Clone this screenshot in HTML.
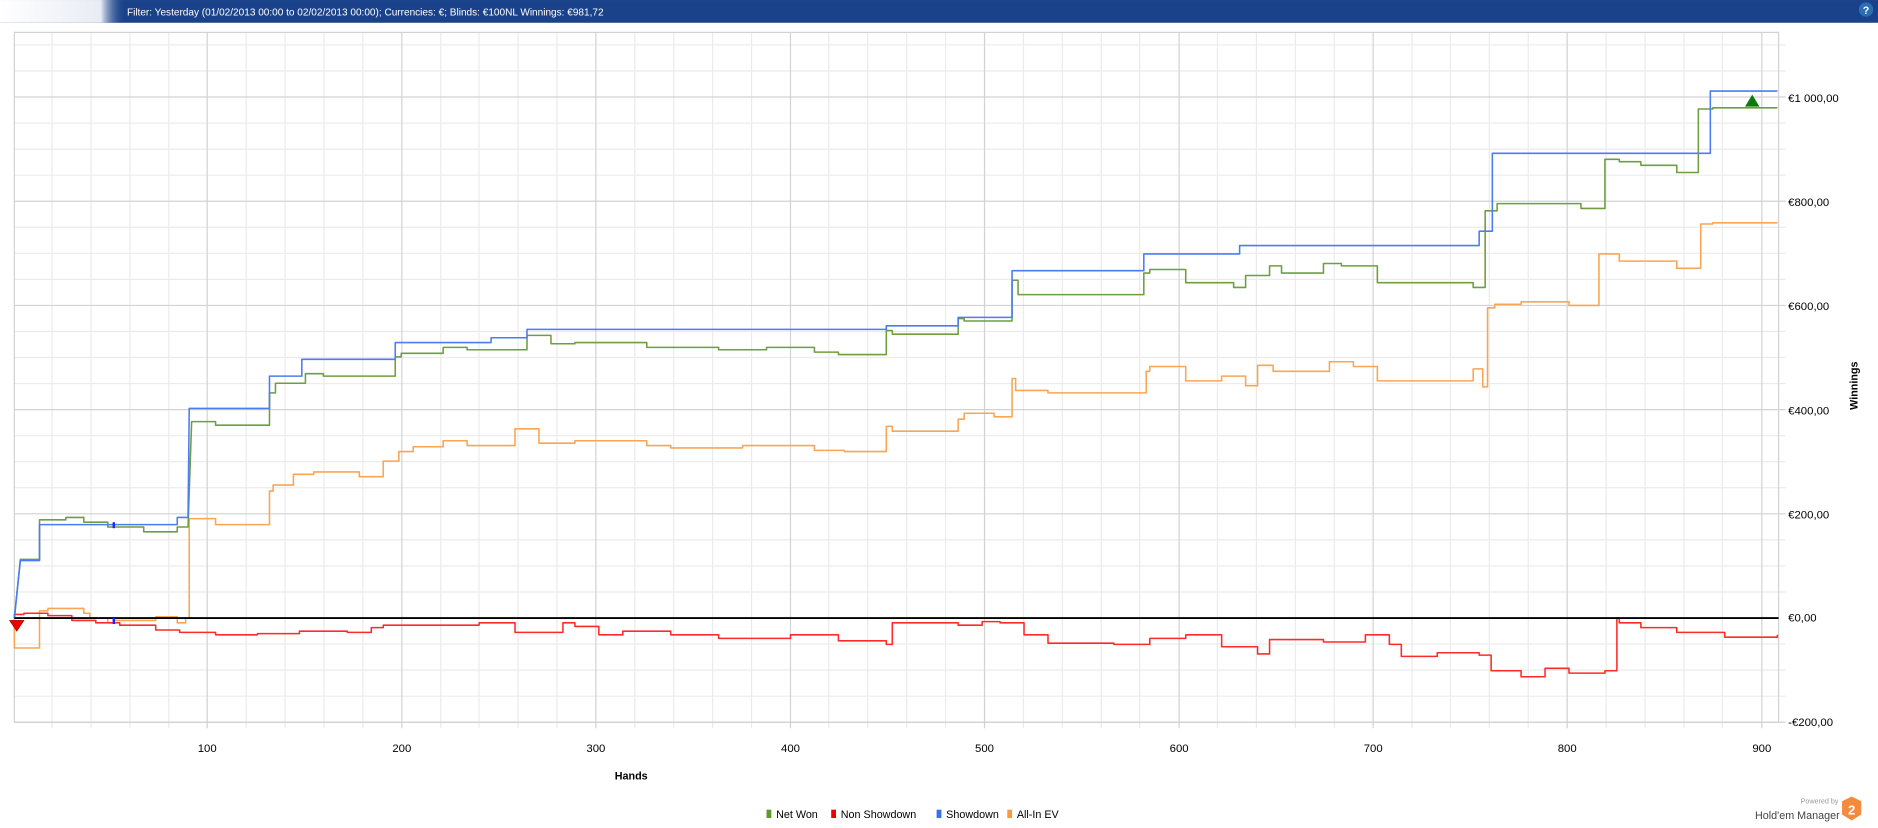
<!DOCTYPE html>
<html><head><meta charset="utf-8"><style>
html,body{margin:0;padding:0;background:#fff;width:1878px;height:828px;overflow:hidden}
svg{display:block}
text{font-family:"Liberation Sans",sans-serif}
</style></head><body>
<svg width="1878" height="828" viewBox="0 0 1568 691.3" xmlns="http://www.w3.org/2000/svg">
<defs>
<linearGradient id="fade" x1="0" x2="1"><stop offset="0" stop-color="#fff"/><stop offset="0.8" stop-color="#e8ecf4"/><stop offset="1" stop-color="#1a428a" stop-opacity="0"/></linearGradient>
</defs>
<rect x="0" y="0" width="1568" height="19" fill="#1a428a"/>
<rect x="0" y="0" width="105" height="19" fill="url(#fade)"/>
<text x="106" y="13" font-size="8.4" fill="#fff">Filter:  Yesterday (01/02/2013 00:00 to 02/02/2013 00:00); Currencies: €; Blinds: €100NL  Winnings:  €981,72</text>
<circle cx="1558" cy="8" r="6" fill="#2a6db3"/>
<text x="1558" y="11.5" font-size="9" font-weight="bold" fill="#fff" text-anchor="middle">?</text>

<g stroke="#ebebeb" stroke-width="1">
<path d="M12 37.5H1491M12 59.25H1491M12 102.75H1491M12 124.5H1491M12 146.25H1491M12 189.75H1491M12 211.5H1491M12 233.25H1491M12 276.75H1491M12 298.5H1491M12 320.25H1491M12 363.75H1491M12 385.5H1491M12 407.25H1491M12 450.75H1491M12 472.5H1491M12 494.25H1491M12 537.75H1491M12 559.5H1491M12 581.25H1491"/>
<path d="M43.5 27V608M76 27V608M108.5 27V608M141 27V608M205.5 27V608M238 27V608M270.5 27V608M303 27V608M368 27V608M400 27V608M432.5 27V608M465 27V608M530 27V608M562.5 27V608M595 27V608M627.5 27V608M692 27V608M724.5 27V608M757 27V608M789.5 27V608M854.5 27V608M887 27V608M919.5 27V608M951.5 27V608M1016.5 27V608M1049 27V608M1081.5 27V608M1114 27V608M1179 27V608M1211 27V608M1243.5 27V608M1276 27V608M1341 27V608M1373.5 27V608M1406 27V608M1438 27V608"/>
</g>
<g stroke="#d2d2d2" stroke-width="1">
<path d="M12 81H1491M12 168H1491M12 255H1491M12 342H1491M12 429H1491M12 603H1491"/>
<path d="M173 27V608M335.5 27V608M497.5 27V608M660 27V608M822 27V608M984.5 27V608M1146.5 27V608M1308.5 27V608M1471 27V608"/>
<path d="M12 27H1485V603H12Z" fill="none"/>
</g>

<g fill="none" stroke-width="1.3" stroke-linejoin="round">
<path stroke="#f9a553" d="M12 516V541H33V510H40V508H70V512H75V516H90V520H95V518H130V515H148V520H155V516H158V433H180V438H225V410H228V405H245V396H262V394H300V398H320V385H333V377H345V373H370V368H390V372H430V358H450V370H480V368H540V372H560V374H620V372H680V376H705V377H740V356H745V360H800V350H805V345H830V348H845V316H848V326H875V328H957V310H960V306H990V318H1020V314H1040V322H1050V305H1063V310H1080V310H1110V302H1130V306H1150V318H1165V318H1230V308H1238V323H1242V257H1248V254H1270V252H1310V255H1335V212H1352V218H1370V218H1400V224H1420V187H1430V186H1484"/>
<path stroke="#ff2a2a" d="M12 516V513H20V512H40V514H60V518H80V520H100V522H130V526H150V528H180V530H215V529H250V527H290V528H310V524H320V522H400V520H430V528H470V520H480V523H500V530H520V527H560V530H600V533H660V530H700V535H740V538H745V520H800V522H820V519H835V520H855V530H875V537H930V538H960V533H990V530H1020V540H1050V546H1060V534H1105V536H1140V530H1160V538H1170V548H1200V545H1235V547H1245V560H1270V565H1290V558H1310V562H1340V560H1350V516H1352V520H1370V524H1400V528H1440V532H1484V530"/>
<path stroke="#6f9e3f" d="M12 516L17 467H33V434H55V432H70V436H90V440H120V444H148V440H157L160 352H180V355H225V328H230V320H255V312H270V314H330V298H335V295H370V290H390V292H440V280H460V287H480V286H540V290H600V292H640V290H680V294H700V296H740V276H745V279H800V266H805V268H845V234H850V246H955V228H960V225H990V236H1030V240H1040V230H1060V222H1070V228H1105V220H1120V222H1150V236H1165V236H1230V240H1240V176H1250V170H1320V174H1340V133H1352V135H1370V138H1400V144H1418V91H1430V90H1484"/>
<path stroke="#4a7cf5" d="M12 516L17 468H33V438H148V432H157L158 341H225V314H252V300H330V286H410V282H440V275H740V272H800V265H845V226H955V212H1035V205H1235V193H1246V128H1428V76H1484"/>
</g>
<path d="M12 516H1485" stroke="#000" stroke-width="1.6"/>
<path d="M8 518H20L14 527Z" fill="#e00" stroke="#900" stroke-width="0.5"/>
<path d="M1457 89H1469L1463 79Z" fill="#0a7a0a"/>
<rect x="94" y="436" width="2" height="5" fill="#22f"/>
<rect x="94" y="516" width="2" height="5" fill="#22f"/>

<g font-size="9.5" fill="#000">
<text x="1493" y="85">€1 000,00</text>
<text x="1493" y="172">€800,00</text>
<text x="1493" y="259">€600,00</text>
<text x="1493" y="346">€400,00</text>
<text x="1493" y="433">€200,00</text>
<text x="1493" y="519">€0,00</text>
<text x="1493" y="606">-€200,00</text>
</g>
<g font-size="9.5" fill="#000" text-anchor="middle">
<text x="173" y="628">100</text><text x="335.5" y="628">200</text><text x="497.5" y="628">300</text><text x="660" y="628">400</text><text x="822" y="628">500</text><text x="984.5" y="628">600</text><text x="1146.5" y="628">700</text><text x="1308.5" y="628">800</text><text x="1471" y="628">900</text>
</g>
<text x="527" y="651" font-size="9" font-weight="bold" text-anchor="middle">Hands</text>
<text transform="translate(1551 322) rotate(-90)" font-size="9" font-weight="bold" text-anchor="middle">Winnings</text>

<g font-size="9">
<rect x="640" y="676" width="4" height="7" fill="#5c9a2c"/><text x="648" y="683">Net Won</text>
<rect x="694" y="676" width="4" height="7" fill="#e00"/><text x="702" y="683">Non Showdown</text>
<rect x="782" y="676" width="4" height="7" fill="#3a6ff0"/><text x="790" y="683">Showdown</text>
<rect x="841" y="676" width="4" height="7" fill="#f99a3e"/><text x="849" y="683">All-In EV</text>
</g>
<text x="1535" y="671" font-size="6" fill="#999" text-anchor="end">Powered by</text>
<text x="1536" y="684" font-size="9" fill="#444" text-anchor="end">Hold'em Manager</text>
<path d="M1546 665L1554 669V680L1546 685L1538 680V669Z" fill="#f48a3c"/>
<text x="1546" y="680" font-size="11" font-weight="bold" fill="#fff" text-anchor="middle">2</text>
</svg>
</body></html>
